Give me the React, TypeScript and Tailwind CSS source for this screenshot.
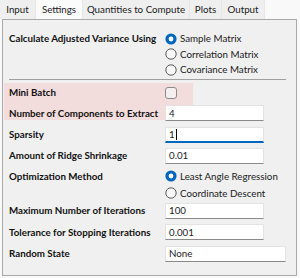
import React from 'react';

const FONT = { fontFamily: 'Lato, "Liberation Sans", sans-serif' };

const tabs = [
  { name: 'Input', w: 'w-[36px]' },
  { name: 'Settings', w: 'w-[47px]', active: true },
  { name: 'Quantities to Compute', w: 'w-[107px]' },
  { name: 'Plots', w: 'w-[32px]' },
  { name: 'Output', w: 'w-[43px]' },
];

function Radio({ checked, label }: { checked?: boolean; label: string }) {
  return (
    <div className="flex items-center gap-[3px]">
      <svg width="12" height="12" viewBox="0 0 12 12">
        {checked ? (
          <>
            <circle cx="6" cy="6" r="5.6" fill="#0067c0" />
            <circle cx="6" cy="6" r="2.4" fill="#ffffff" />
          </>
        ) : (
          <circle cx="6" cy="6" r="5.2" fill="#f7f7f7" stroke="#5a5a5a" strokeWidth="1" />
        )}
      </svg>
      <span className="text-[9.75px] text-[#1a1a1a]">{label}</span>
    </div>
  );
}

function Field({ value, wide, focused }: { value: string; wide?: boolean; focused?: boolean }) {
  return (
    <div
      className={`h-[16px] ${wide ? 'w-[121px]' : 'w-[99px]'} bg-white border border-[#e3e3e3] ${
        focused ? 'border-b-2 border-b-[#0067c0]' : 'border-b-[#8a8a8a]'
      } flex items-center pl-[3px] text-[9.75px] text-[#1a1a1a]`}
    >
      <span>{value}</span>
      {focused && <span className="ml-[1px] w-px h-[11px] bg-black" />}
    </div>
  );
}

export default function App() {
  return (
    <div className="w-[300px] h-[278px] bg-[#f9f9f9] overflow-hidden" style={FONT}>
      {/* tab strip */}
      <div className="flex h-[19px]">
        {tabs.map((t) => (
          <div
            key={t.name}
            className={`${t.w} h-full flex items-center justify-center text-[9.75px] text-[#1a1a1a] border-r border-[#e6e6e6] ${
              t.active ? 'bg-[#fbfbfb]' : 'bg-[#efefef]'
            }`}
          >
            {t.name}
          </div>
        ))}
      </div>

      {/* settings panel */}
      <div className="ml-[2px] w-[295px] h-[257px] border border-[#a9a9a9] bg-[#f0f0f0] pl-[6px]">
        <div className="flex pt-[11px]">
          <div className="w-[156px] shrink-0 h-[15px] flex items-center text-[9.75px] font-bold text-[#111]">
            Calculate Adjusted Variance Using
          </div>
          <div className="flex flex-col">
            <div className="h-[15px] flex items-center"><Radio checked label="Sample Matrix" /></div>
            <div className="h-[16px] flex items-center"><Radio label="Correlation Matrix" /></div>
            <div className="h-[15px] flex items-center"><Radio label="Covariance Matrix" /></div>
          </div>
        </div>

        <div className="mt-[2px] mb-[3px] w-[277px] h-px bg-[#a0a0a0]" />

        {/* highlighted batch options */}
        <div className="relative -ml-[5px] pl-[5px]">
          <div className="absolute left-0 top-0 w-[189px] h-[37px] bg-[#f3dcdc]" />
          <div className="relative">
            <div className="flex items-center h-[19px]">
              <div className="w-[156px] shrink-0 text-[9.75px] font-bold text-[#111]">Mini Batch</div>
              <div className="w-[12px] h-[12px] rounded-[3px] border border-[#8a8a8a] bg-[#f5eeee]" />
            </div>
            <div className="flex items-center h-[22px]">
              <div className="w-[156px] shrink-0 text-[9.75px] font-bold text-[#111]">Number of Components to Extract</div>
              <Field value="4" />
            </div>
          </div>
        </div>

        <div className="flex items-center h-[21px]">
          <div className="w-[156px] shrink-0 text-[9.75px] font-bold text-[#111]">Sparsity</div>
          <Field value="1" focused />
        </div>
        <div className="flex items-center h-[21px]">
          <div className="w-[156px] shrink-0 text-[9.75px] font-bold text-[#111]">Amount of Ridge Shrinkage</div>
          <Field value="0.01" />
        </div>

        <div className="flex">
          <div className="w-[156px] shrink-0 h-[20px] flex items-center text-[9.75px] font-bold text-[#111]">
            Optimization Method
          </div>
          <div className="flex flex-col">
            <div className="h-[20px] flex items-center"><Radio checked label="Least Angle Regression" /></div>
            <div className="h-[14px] flex items-center"><Radio label="Coordinate Descent" /></div>
          </div>
        </div>

        <div className="flex items-center h-[21px]">
          <div className="w-[156px] shrink-0 text-[9.75px] font-bold text-[#111]">Maximum Number of Iterations</div>
          <Field value="100" />
        </div>
        <div className="flex items-center h-[22px]">
          <div className="w-[156px] shrink-0 text-[9.75px] font-bold text-[#111]">Tolerance for Stopping Iterations</div>
          <Field value="0.001" />
        </div>
        <div className="flex items-center h-[21px]">
          <div className="w-[156px] shrink-0 text-[9.75px] font-bold text-[#111]">Random State</div>
          <Field value="None" wide />
        </div>
      </div>
    </div>
  );
}
